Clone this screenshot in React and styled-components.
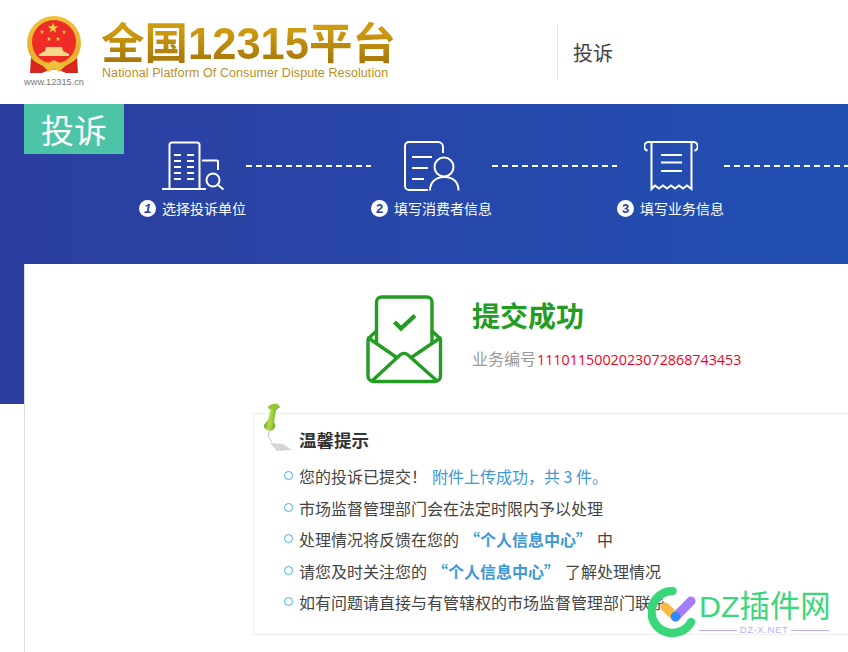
import styled, { createGlobalStyle } from 'styled-components'

const GlobalStyle = createGlobalStyle`
    html, body {
        margin: 0;
        padding: 0;
        background: #fff;
        overflow: hidden;
        font-family: "Noto Sans CJK SC", "Liberation Sans", sans-serif;
    }
    ul { margin: 0; padding: 0; list-style: none; }
`

const Page = styled.div`
    width: 848px;
    height: 652px;
    overflow: hidden;
    position: relative;
`

const Header = styled.header`
    height: 104px;
    display: flex;
    align-items: flex-start;
    padding-left: 24px;
    box-sizing: border-box;
`

const EmblemBox = styled.div`
    width: 60px;
    padding-top: 16px;
    display: flex;
    flex-direction: column;
    align-items: center;
    svg { display: block; }
`

const Site = styled.span`
    font: 9.2px/12px "Liberation Sans", sans-serif;
    color: #777;
    margin-top: 2px;
    white-space: nowrap;
`

const Brand = styled.div`
    margin-left: 17px;
    padding-top: 22px;
    width: 456px;
`

const BrandName = styled.h1`
    margin: 0;
    font: bold 43.5px/44px "Liberation Sans", "Noto Sans CJK SC", sans-serif;
    white-space: nowrap;
    background: linear-gradient(180deg, #cf9c10 15%, #a8780c 90%);
    -webkit-background-clip: text;
    background-clip: text;
    color: transparent;
    width: 300px;
`

const BrandSub = styled.p`
    margin: 0 0 0 1px;
    font: 12.5px/14px "Liberation Sans", sans-serif;
    letter-spacing: 0.09px;
    color: #b88f26;
    white-space: nowrap;
`

const Divider = styled.div`
    width: 1px;
    height: 56px;
    margin-top: 24px;
    background: #e6e6e6;
`

const NavTitle = styled.div`
    margin: 38px 0 0 15px;
    font-size: 20px;
    line-height: 30px;
    color: #444;
`

const Band = styled.section`
    height: 300px;
    display: flex;
    align-items: flex-start;
    padding-left: 24px;
    box-sizing: border-box;
    background: linear-gradient(90deg, #2c3e9f 0%, #2150b3 100%);
`

const Tag = styled.div`
    width: 100px;
    height: 50px;
    flex: none;
    background: #4dc4a8;
    color: #fff;
    font-size: 33px;
    line-height: 50px;
    text-align: center;
`

const Steps = styled.div`
    display: flex;
    align-items: flex-start;
    margin-left: 15px;
    padding-top: 36px;
`

const Step = styled.div`
    width: ${p => p.$w}px;
    flex: none;
    display: flex;
    flex-direction: column;
    align-items: center;
    svg { display: block; }
`

const StepLabel = styled.div`
    display: flex;
    align-items: center;
    justify-content: space-between;
    width: 100%;
    height: 20px;
    margin-top: 6px;
    font-size: 14px;
    color: #fff;
    white-space: nowrap;
`

const Badge = styled.span`
    width: 17px;
    height: 17px;
    flex: none;
    border-radius: 50%;
    background: #fff;
    color: #2c3e9f;
    font: ${p => p.$italic ? 'italic bold' : 'bold'} 13px/17px "Liberation Sans", sans-serif;
    text-align: center;
`

const Dash = styled.div`
    width: ${p => p.$w}px;
    flex: none;
    margin-top: 25px;
    height: 2px;
    background: repeating-linear-gradient(90deg, #fff 0 6px, transparent 6px 10px);
`

const Card = styled.main`
    position: relative;
    width: 1100px;
    height: 388px;
    margin: -140px 0 0 24px;
    box-sizing: border-box;
    background: #fff;
    border-left: 1px solid #ddd;
    padding-top: 30px;
`

const Success = styled.div`
    display: flex;
    align-items: flex-start;
    margin-left: 340px;
    svg { display: block; flex: none; }
`

const SuccessText = styled.div`
    margin-left: 29px;
    padding-top: 1px;
`

const SuccessTitle = styled.h2`
    margin: 0;
    font-size: 28px;
    line-height: 40px;
    font-weight: 700;
    color: #249c24;
`

const CodeLine = styled.p`
    margin: 11px 0 0;
    font-size: 16px;
    line-height: 24px;
    color: #999;
    white-space: nowrap;
`

const Code = styled.span`
    font-family: "Open Sans", sans-serif;
    font-size: 14.3px;
    color: #f5001d;
    margin-left: 1px;
`

const Tips = styled.section`
    position: relative;
    width: 800px;
    height: 222px;
    margin: 29px 0 0 228px;
    box-sizing: border-box;
    border: 1px solid #eee;
    padding: 13px 0 0 45px;
`

const TipsTitle = styled.h3`
    margin: 0 0 8px;
    font-size: 17.5px;
    line-height: 26px;
    font-weight: 700;
    color: #333;
`

const TipItem = styled.li`
    position: relative;
    height: 31.5px;
    line-height: 31.5px;
    font-size: 16px;
    color: #444;
    white-space: nowrap;
    &::before {
        content: "";
        position: absolute;
        left: -15px;
        top: 10px;
        width: 7px;
        height: 7px;
        border: 1.5px solid #3ab5ee;
        border-radius: 50%;
    }
`

const Link = styled.span`
    color: #3d98d8;
    margin-left: 5px;
`

const Strong = styled.b`
    color: #3d98d8;
    font-weight: 700;
    margin: 0 5px;
`

const Watermark = styled.div`
    position: absolute;
    left: 648px;
    top: 586px;
    display: flex;
    align-items: flex-start;
    svg { display: block; flex: none; }
`

const WatermarkText = styled.div`
    margin-left: 3px;
    padding-top: 2px;
    width: 130px;
`

const WatermarkName = styled.div`
    font: 30.4px/36px "Liberation Sans", "Noto Sans CJK SC", sans-serif;
    color: #3ad67a;
    white-space: nowrap;
`

const WatermarkNet = styled.div`
    display: flex;
    align-items: center;
    gap: 3px;
    font: 9.5px/12px "Liberation Sans", sans-serif;
    letter-spacing: 0.6px;
    color: #c2acff;
    white-space: nowrap;
    &::before, &::after {
        content: "";
        flex: 1;
        height: 1px;
        background: #c2acff;
    }
`

const starPoints = (cx, cy, r) => {
    const pts = []
    for (let i = 0; i < 10; i++) {
        const rad = i % 2 ? r * 0.4 : r
        const a = -Math.PI / 2 + (i * Math.PI) / 5
        pts.push(`${(cx + rad * Math.cos(a)).toFixed(2)},${(cy + rad * Math.sin(a)).toFixed(2)}`)
    }
    return pts.join(' ')
}

const Emblem = () => (
    <svg width="58" height="58" viewBox="0 0 58 58">
        <defs>
            <linearGradient id="ring" x1="0" y1="0" x2="0" y2="1">
                <stop offset="0" stopColor="#f2c23c" />
                <stop offset="1" stopColor="#e3a72a" />
            </linearGradient>
        </defs>
        <circle cx="29" cy="27" r="27" fill="url(#ring)" />
        <circle cx="29" cy="26" r="22" fill="#ee2b24" />
        <polygon points={starPoints(28, 12, 5.5)} fill="#f7d24a" />
        <polygon points={starPoints(17, 16, 2.4)} fill="#f7d24a" />
        <polygon points={starPoints(39, 16, 2.4)} fill="#f7d24a" />
        <polygon points={starPoints(24, 23, 2.4)} fill="#f7d24a" />
        <polygon points={starPoints(33, 23, 2.4)} fill="#f7d24a" />
        <path d="M14 38 L20 35 L21 31 H37 L38 35 L44 38 V40 H14 Z" fill="#f5d78a" />
        <path d="M6 41 C14 50 22 52 29 52 C36 52 44 50 52 41 L53 57 H41 L29 52 L17 57 H5 Z" fill="#d8261f" />
        <path d="M8 39 C15 46 23 47 29 47 C35 47 43 46 50 39 L52 42 C44 50 36 51 29 51 C22 51 14 50 6 42 Z" fill="#edb62f" />
        <path d="M18 50 L29 44 L40 50 L34 56 L29 52 L24 56 Z" fill="#f0bf3a" />
    </svg>
)

const BuildingIcon = () => (
    <svg width="64" height="52" viewBox="160 140 64 52" fill="none" stroke="#fff" strokeWidth="2">
        <path d="M168.5 188.5 V145 a2.5 2.5 0 0 1 2.5 -2.5 H196 a2.5 2.5 0 0 1 2.5 2.5 V188.5" />
        <path d="M161 189 H205" />
        <path d="M173 155 H180 M186 155 H193 M173 161 H180 M186 161 H193 M173 167 H180 M186 167 H193 M173 173 H180 M186 173 H193 M173 179 H180 M186 179 H193" />
        <path d="M201 160.5 H216 a1 1 0 0 1 1 1 V170" />
        <circle cx="212" cy="180" r="6.5" />
        <path d="M217 185 L222.5 189.5" />
    </svg>
)

const PersonIcon = () => (
    <svg width="58" height="52" viewBox="403 140 58 52" fill="none" stroke="#fff" strokeWidth="2">
        <path d="M428 190 H409 a4 4 0 0 1 -4 -4 V146 a4 4 0 0 1 4 -4 H438 a5 5 0 0 1 5 5 V153" />
        <path d="M412 157 H432 M412 168 H428 M412 179 H424" />
        <circle cx="444" cy="167" r="9.5" />
        <path d="M430 190.5 C430 182 436 177 444.5 177 C453 177 458.5 182 458.5 190.5" />
    </svg>
)

const ReceiptIcon = () => (
    <svg width="54" height="52" viewBox="643 140 54 52" fill="none" stroke="#fff" strokeWidth="2">
        <path d="M650.5 142 H647.5 a4.5 4.5 0 0 0 -1 8.8 M690.5 142 H692.5 a4.5 4.5 0 0 1 1 8.8" />
        <path d="M647 142 H693" />
        <path d="M650.5 142 V189 L654 185.5 L658 188.5 L662 185.5 L666 188.5 L670 185.5 L674 188.5 L678 185.5 L682 188.5 L686 185.5 L690.5 189 V142" />
        <path d="M660 155 H681 M660 162.5 H681 M660 171 H681" />
    </svg>
)

const EnvelopeIcon = () => (
    <svg width="78" height="90" viewBox="365 294 78 90" fill="none" stroke="#249c24" strokeWidth="3.4" strokeLinejoin="round" strokeLinecap="round">
        <path d="M376.5 343 V302 a5 5 0 0 1 5 -5 H427 a5 5 0 0 1 5 5 V343" />
        <path d="M376.5 331 L370 337 a4 4 0 0 0 -2 3 V376 a5.5 5.5 0 0 0 5.5 5.5 H435 a5.5 5.5 0 0 0 5.5 -5.5 V340 a4 4 0 0 0 -2 -3 L432 331" />
        <path d="M368.5 338 L396 357 M440 338 L412 357" />
        <path d="M373 380 L400 355 a6 6 0 0 1 8 0 L436 380" />
        <path d="M394.5 322 L401 328.5 L415 315.5" strokeWidth="4.4" strokeLinecap="butt" strokeLinejoin="miter" />
    </svg>
)

const PinIcon = ({ className }) => (
    <svg className={className} width="32" height="50" viewBox="0 0 32 50">
        <defs>
            <linearGradient id="pin" x1="0" y1="0" x2="1" y2="0.2">
                <stop offset="0" stopColor="#4e8a18" />
                <stop offset="0.45" stopColor="#b4dc4a" />
                <stop offset="1" stopColor="#5c9a1c" />
            </linearGradient>
        </defs>
        <path d="M7 40 L20 41 L29 47 L14 48 Z" fill="#d4d6d4" />
        <path d="M6.500 27 L5 33 L9 39" fill="none" stroke="#b5b5b5" strokeWidth="0.9" />
        <path d="M6 4 L15 2 L17 4 L13 7 L11 19 C13 22 12.500 25 10 27 C6 29 1 26 0.800 23 C1 21 3.500 19 5 17 L7.500 7 Z" fill="url(#pin)" />
        <ellipse cx="10.500" cy="3.500" rx="5.500" ry="2.600" fill="#92c938" transform="rotate(-12 10.500 3.500)" />
    </svg>
)

const Pin = styled(PinIcon)`
    position: absolute;
    left: 9px;
    top: -11px;
`

const WatermarkLogo = () => (
    <svg width="48" height="52" viewBox="648 586 48 52" fill="none" strokeLinecap="round">
        <path d="M672.500 591 A21 21 0 1 0 691 622" stroke="#3ad67a" strokeWidth="8.500" />
        <path d="M665 607 L675.500 617" stroke="#fdb945" strokeWidth="9" />
        <path d="M675.500 617 L691 601" stroke="#a67cff" strokeWidth="9" />
        <circle cx="675.500" cy="616.500" r="4.800" fill="#2a8cff" />
    </svg>
)

const App = () => (
    <Page>
        <GlobalStyle />
        <Header>
            <EmblemBox>
                <Emblem />
                <Site>www.12315.cn</Site>
            </EmblemBox>
            <Brand>
                <BrandName>全国12315平台</BrandName>
                <BrandSub>National Platform Of Consumer Dispute Resolution</BrandSub>
            </Brand>
            <Divider />
            <NavTitle>投诉</NavTitle>
        </Header>
        <Band>
            <Tag>投诉</Tag>
            <Steps>
                <Step $w={107}>
                    <BuildingIcon />
                    <StepLabel><Badge $italic>1</Badge>选择投诉单位</StepLabel>
                </Step>
                <Dash $w={125} />
                <Step $w={121}>
                    <PersonIcon />
                    <StepLabel><Badge>2</Badge>填写消费者信息</StepLabel>
                </Step>
                <Dash $w={125} />
                <Step $w={107}>
                    <ReceiptIcon />
                    <StepLabel><Badge>3</Badge>填写业务信息</StepLabel>
                </Step>
                <Dash $w={125} />
            </Steps>
        </Band>
        <Card>
            <Success>
                <EnvelopeIcon />
                <SuccessText>
                    <SuccessTitle>提交成功</SuccessTitle>
                    <CodeLine>业务编号<Code>1110115002023072868743453</Code></CodeLine>
                </SuccessText>
            </Success>
            <Tips>
                <Pin />
                <TipsTitle>温馨提示</TipsTitle>
                <ul>
                    <TipItem>您的投诉已提交！<Link>附件上传成功，共 3 件。</Link></TipItem>
                    <TipItem>市场监督管理部门会在法定时限内予以处理</TipItem>
                    <TipItem>处理情况将反馈在您的<Strong>“个人信息中心”</Strong>中</TipItem>
                    <TipItem>请您及时关注您的<Strong>“个人信息中心”</Strong>了解处理情况</TipItem>
                    <TipItem>如有问题请直接与有管辖权的市场监督管理部门联系</TipItem>
                </ul>
            </Tips>
        </Card>
        <Watermark>
            <WatermarkLogo />
            <WatermarkText>
                <WatermarkName>DZ插件网</WatermarkName>
                <WatermarkNet>DZ-X.NET</WatermarkNet>
            </WatermarkText>
        </Watermark>
    </Page>
)

export default App
